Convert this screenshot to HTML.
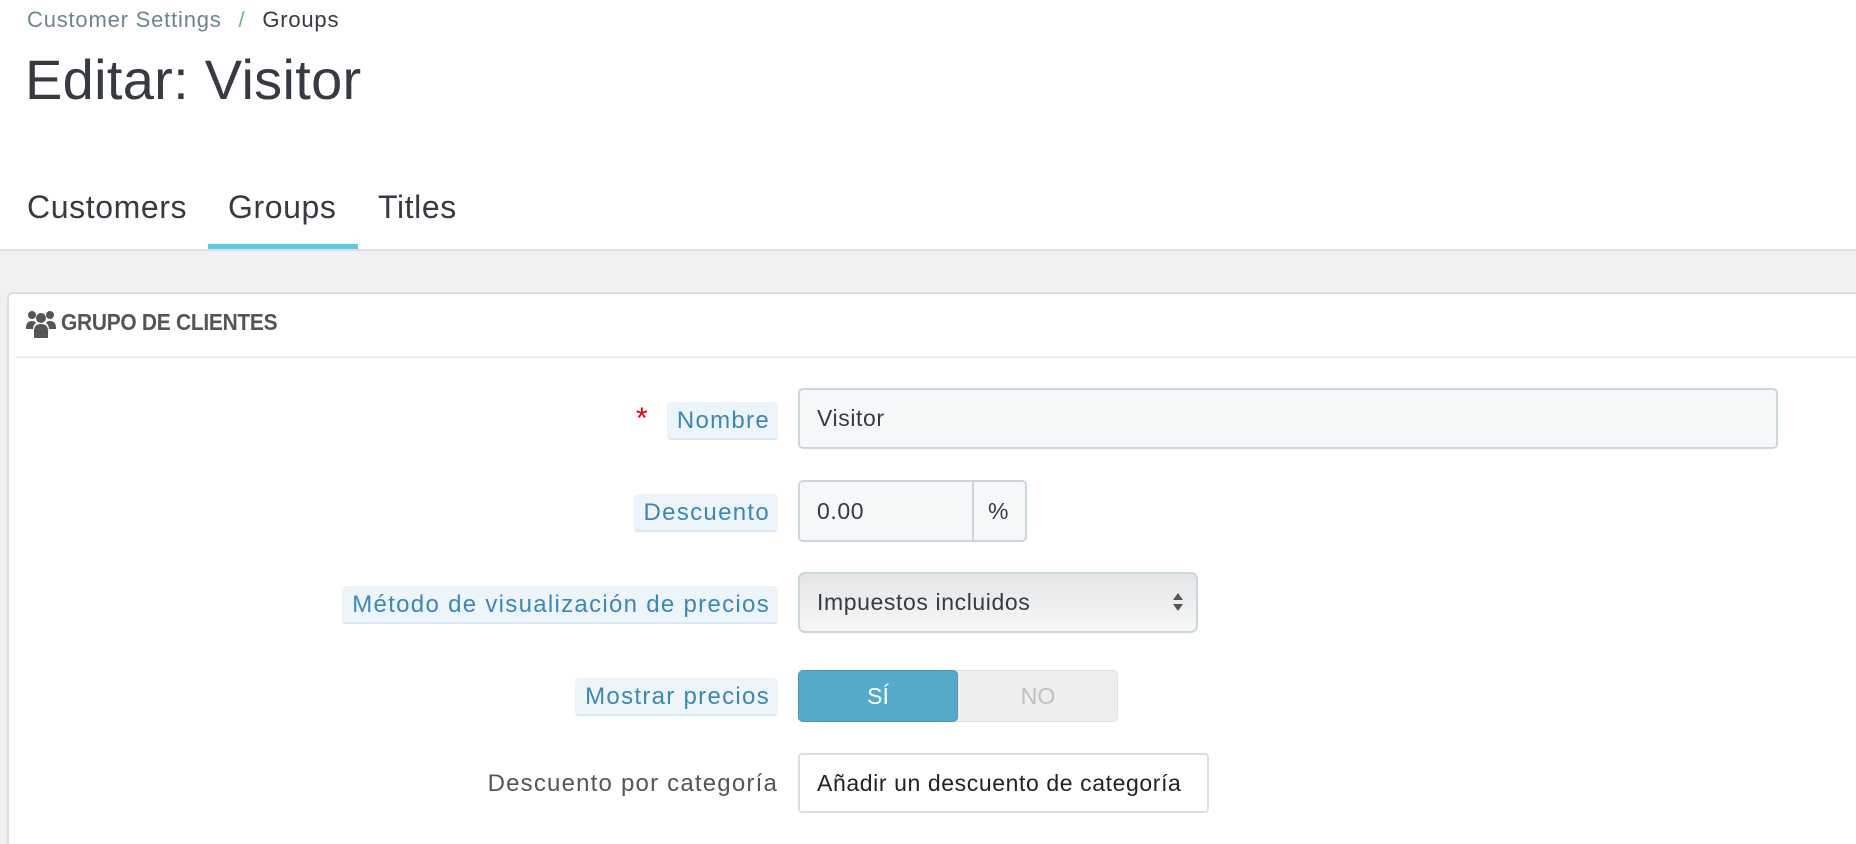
<!DOCTYPE html>
<html><head><meta charset="utf-8"><style>
*{box-sizing:border-box;margin:0;padding:0}
html{width:1856px;height:844px;overflow:hidden}
body{width:1856px;height:844px;overflow:hidden;background:#fff;font-family:"Liberation Sans",sans-serif;position:relative;color:#363a41}
.a{position:absolute;white-space:nowrap}
.lbl{position:absolute;height:38px;background:#edf5fa;border-bottom:2px solid #d6e8f3;border-radius:4px;color:#3c87b3;font-size:24px;letter-spacing:1.3px;line-height:37px;text-align:right;padding:0 8px 0 10px;right:1078px}
.inp{position:absolute;left:798px;background:#f5f8f9;border:2px solid #c9d6db;border-radius:5px;font-size:23px;letter-spacing:0.6px;color:#363a41;padding-left:17px}
</style></head><body>
<div class="a" style="left:27px;top:7px;font-size:22px;letter-spacing:0.8px;color:#6c868e">Customer Settings <span style="color:#70b580;margin:0 10px">/</span> <span style="color:#363a41">Groups</span></div>
<div class="a" style="left:25px;top:47px;font-size:56px;letter-spacing:0.3px;color:#363a41">Editar: Visitor</div>
<div class="a" style="left:27px;top:189px;font-size:32px;letter-spacing:0.6px;color:#363a41">Customers</div>
<div class="a" style="left:228px;top:189px;font-size:32px;letter-spacing:0.6px;color:#363a41">Groups</div>
<div class="a" style="left:378px;top:189px;font-size:32px;letter-spacing:0.6px;color:#363a41">Titles</div>
<div class="a" style="left:208px;top:244px;width:150px;height:6px;background:#5fc9e8"></div>
<div class="a" style="left:0;top:249px;width:1856px;height:595px;background:#eff1f2;border-top:2px solid #dcdfe1"></div>
<div class="a" style="left:7px;top:292px;width:1849px;height:552px;background:#fff;border:2px solid #dadee0;border-right:none;border-bottom:none;border-radius:6px 0 0 0"></div>
<div class="a" style="left:16px;top:356px;width:1840px;height:2px;background:#eceeef"></div>
<svg class="a" style="left:26px;top:310px" width="30" height="28" viewBox="0 0 30 28" fill="#555">
<circle cx="6" cy="5" r="4"/><circle cx="24" cy="5" r="4"/><circle cx="15" cy="8" r="5"/>
<path d="M0 18 Q0 11 6 11 Q9 11 10 13 Q7 15 7 19 L0 19Z"/><path d="M30 18 Q30 11 24 11 Q21 11 20 13 Q23 15 23 19 L30 19Z"/>
<path d="M8 28 L8 21 Q8 14 15 14 Q22 14 22 21 L22 28Z"/></svg>
<div class="a" style="left:61px;top:309px;font-size:23px;font-weight:bold;color:#555;letter-spacing:-0.3px;transform:scaleX(0.91);transform-origin:left">GRUPO DE CLIENTES</div>

<div class="a" style="left:636px;top:402px;font-size:30px;color:#e3000f">*</div>
<div class="lbl" style="top:402px">Nombre</div>
<div class="inp" style="top:388px;width:980px;height:61px;line-height:57px">Visitor</div>

<div class="lbl" style="top:494px">Descuento</div>
<div class="inp" style="top:480px;width:229px;height:62px;line-height:58px">0.00</div>
<div class="a" style="left:972px;top:482px;width:2px;height:58px;background:#c9d6db"></div>
<div class="a" style="left:988px;top:480px;line-height:62px;font-size:23px">%</div>

<div class="lbl" style="top:586px">Método de visualización de precios</div>
<div class="a" style="left:798px;top:572px;width:400px;height:61px;border:2px solid #c9d6db;border-radius:7px;background:linear-gradient(#e3e5e7,#eceeef 50%,#f7f7f7);font-size:23px;letter-spacing:0.6px;line-height:57px;padding-left:17px;color:#363a41">Impuestos incluidos</div>
<svg class="a" style="left:1172px;top:592px" width="12" height="20" viewBox="0 0 12 20" fill="#555"><path d="M6 1 L11 8 L1 8Z M1 12 L11 12 L6 19Z"/></svg>

<div class="lbl" style="top:678px">Mostrar precios</div>
<div class="a" style="left:798px;top:670px;width:320px;height:52px;border-radius:5px;background:#eeeeee;border:1px solid #e0e0e0"></div>
<div class="a" style="left:798px;top:670px;width:160px;height:52px;border-radius:5px;background:#55a9c9;border:1px solid #4a98b6;color:#fff;font-size:23px;line-height:50px;text-align:center">SÍ</div>
<div class="a" style="left:958px;top:670px;width:160px;height:52px;color:#c0c0c0;font-size:23px;line-height:52px;text-align:center">NO</div>

<div class="a" style="right:1078px;top:770px;font-size:24px;letter-spacing:1.2px;color:#555">Descuento por categoría</div>
<div class="a" style="left:798px;top:753px;width:411px;height:60px;border:2px solid #dcdfe1;border-radius:4px;background:#fff;font-size:23px;letter-spacing:0.6px;line-height:56px;padding-left:17px;color:#222">Añadir un descuento de categoría</div>
</body></html>
